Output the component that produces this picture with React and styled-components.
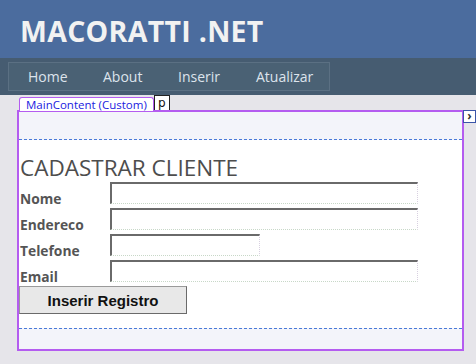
import styled, { createGlobalStyle } from "styled-components";

const Global = createGlobalStyle`
  html, body { margin: 0; padding: 0; }
  body {
    width: 476px;
    height: 364px;
    overflow: hidden;
    background: #e6e5ea;
    font-family: "Open Sans", "DejaVu Sans", sans-serif;
  }
`;

const Header = styled.header`
  height: 58px;
  background: #4b6c9e;
  display: flex;
  align-items: center;
  padding-left: 20px;
`;

const Title = styled.h1`
  margin: 0;
  color: #f2f2f2;
  font-size: 28.5px;
  font-weight: 700;
  letter-spacing: 0.3px;
  padding-top: 3px;
`;

const NavBand = styled.div`
  height: 37px;
  background: #465c71;
  padding: 4px 0 0 8px;
  box-sizing: border-box;
`;

const Menu = styled.nav`
  width: 322px;
  height: 29px;
  box-sizing: border-box;
  border: 1px solid #5b7083;
  background: #4a6174;
  display: flex;
  align-items: center;
  padding-left: 19px;
`;

const MenuItem = styled.span`
  color: #dde4ec;
  font-size: 14px;
  width: ${p => p.w}px;
`;

const Designer = styled.div`
  position: relative;
  padding: 15px 12px 0 17px;
`;

const Tab = styled.div`
  position: absolute;
  top: ${p => p.top}px;
  left: ${p => p.left}px;
  height: ${p => p.h}px;
  box-sizing: border-box;
  padding: 0 ${p => p.pad}px;
  background: #fff;
  border: 1px solid ${p => p.border};
  border-bottom: none;
  border-radius: ${p => (p.round ? "3px 3px 0 0" : "0")};
  color: ${p => p.color};
  font-size: ${p => p.size}px;
  line-height: ${p => p.h - 1}px;
  font-family: ${p => p.font};
`;

const Arrow = styled.div`
  position: absolute;
  top: 15px;
  right: 0;
  width: 13px;
  height: 13px;
  box-sizing: border-box;
  border: 1px solid #3a55a8;
  background: #fff;
  color: #333;
  font-size: 12px;
  line-height: 10px;
  text-align: center;
  font-weight: 700;
`;

const Frame = styled.div`
  border: 2px solid #b45cf0;
  height: 241px;
  box-sizing: border-box;
  display: flex;
  flex-direction: column;
  background: #fff;
`;

const Dotted = styled.div`
  height: ${p => p.h}px;
  background: #f3f4fa;
  border-${p => p.side}: 1px dashed #4a7ad8;
  flex-shrink: 0;
`;

const Content = styled.div`
  flex: 1;
  padding: 16px 0 0 1px;
  background: #fff;
`;

const Heading = styled.h2`
  margin: 0 0 2px 0;
  font-weight: 400;
  font-size: 22.5px;
  color: #4d4d4d;
  line-height: 24px;
`;

const Row = styled.div`
  display: flex;
  align-items: flex-start;
  height: 26px;
`;

const Label = styled.label`
  width: 90px;
  margin-top: 8px;
  font-weight: 700;
  font-size: 13.8px;
  color: #555;
  line-height: 18px;
`;

const Field = styled.div`
  width: ${p => p.w}px;
  height: 22px;
  box-sizing: border-box;
  border-top: 2px solid #6a6a6a;
  border-left: 2px solid #6a6a6a;
  border-right: 1px dotted #d8d0e0;
  border-bottom: 1px dotted #c8d8c8;
`;

const Button = styled.button`
  display: block;
  margin-left: -1px;
  width: 168px;
  height: 28px;
  background: #e8e8e8;
  border: 1px solid #9a9a9a;
  border-right-color: #6a6a6a;
  border-bottom-color: #6a6a6a;
  font-family: "Liberation Sans", Arial, sans-serif;
  font-weight: 700;
  font-size: 15px;
  color: #111;
  padding: 0;
`;

export default function App() {
  return (
    <>
      <Global />
      <Header>
        <Title>MACORATTI .NET</Title>
      </Header>
      <NavBand>
        <Menu>
          <MenuItem w={75}>Home</MenuItem>
          <MenuItem w={75}>About</MenuItem>
          <MenuItem w={78}>Inserir</MenuItem>
          <MenuItem w={70}>Atualizar</MenuItem>
        </Menu>
      </NavBand>
      <Designer>
        <Tab top={2} left={19} h={14} pad={6} border="#b45cf0" round color="#1a1ae0" size={11.5} font='"Open Sans", sans-serif'>
          MainContent (Custom)
        </Tab>
        <Tab top={0} left={154} h={15} pad={3} border="#222" color="#111" size={12} font='"DejaVu Sans", sans-serif'>
          p
        </Tab>
        <Arrow>›</Arrow>
        <Frame>
          <Dotted h={27} side="bottom" />
          <Content>
            <Heading>CADASTRAR CLIENTE</Heading>
            <Row>
              <Label>Nome</Label>
              <Field w={308} />
            </Row>
            <Row>
              <Label>Endereco</Label>
              <Field w={308} />
            </Row>
            <Row>
              <Label>Telefone</Label>
              <Field w={150} />
            </Row>
            <Row>
              <Label>Email</Label>
              <Field w={308} />
            </Row>
            <Button>Inserir Registro</Button>
          </Content>
          <Dotted h={20} side="top" />
        </Frame>
      </Designer>
    </>
  );
}
